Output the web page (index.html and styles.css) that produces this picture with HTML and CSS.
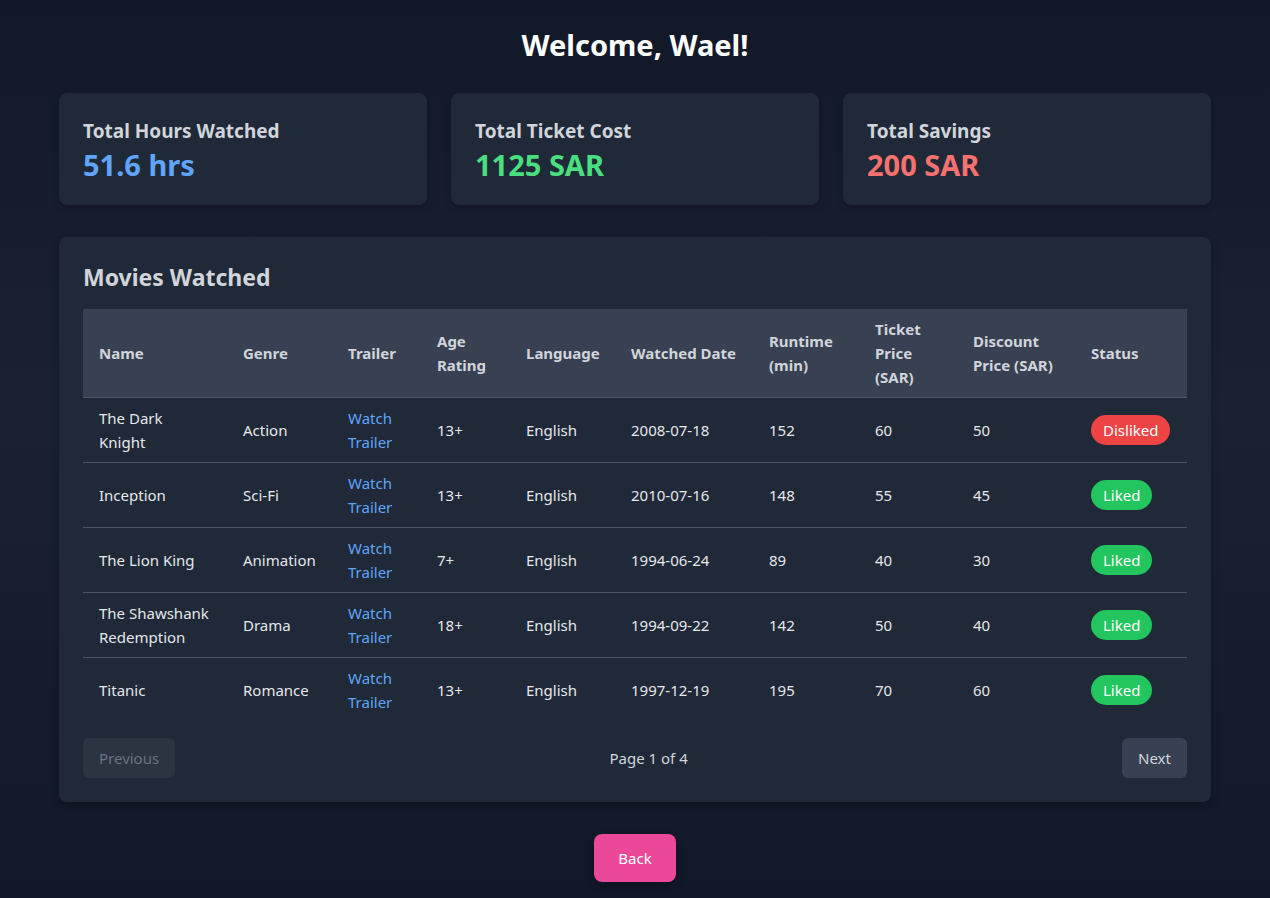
FILE: index.html
```html
<!DOCTYPE html>
<html lang="en">
<head>
<meta charset="utf-8">
<title>Dashboard</title>
<link rel="stylesheet" href="styles.css">
</head>
<body>
<main class="page">
  <h1 class="welcome">Welcome, Wael!</h1>
  <section class="stats">
    <div class="stat-card">
      <div class="stat-label">Total Hours Watched</div>
      <div class="stat-value blue">51.6 hrs</div>
    </div>
    <div class="stat-card">
      <div class="stat-label">Total Ticket Cost</div>
      <div class="stat-value green">1125 SAR</div>
    </div>
    <div class="stat-card">
      <div class="stat-label">Total Savings</div>
      <div class="stat-value red">200 SAR</div>
    </div>
  </section>

  <section class="movies-card">
    <h2 class="movies-title">Movies Watched</h2>
    <table class="movies">
      <thead>
        <tr>
          <th class="c-name">Name</th>
          <th class="c-genre">Genre</th>
          <th class="c-trailer">Trailer</th>
          <th class="c-age">Age Rating</th>
          <th class="c-lang">Language</th>
          <th class="c-date">Watched Date</th>
          <th class="c-run">Runtime (min)</th>
          <th class="c-ticket">Ticket Price (SAR)</th>
          <th class="c-disc">Discount Price (SAR)</th>
          <th class="c-status">Status</th>
        </tr>
      </thead>
      <tbody>
        <tr>
          <td>The Dark Knight</td><td>Action</td><td><a class="trailer" href="#">Watch Trailer</a></td><td>13+</td><td>English</td><td>2008-07-18</td><td>152</td><td>60</td><td>50</td><td><span class="badge disliked">Disliked</span></td>
        </tr>
        <tr>
          <td>Inception</td><td>Sci-Fi</td><td><a class="trailer" href="#">Watch Trailer</a></td><td>13+</td><td>English</td><td>2010-07-16</td><td>148</td><td>55</td><td>45</td><td><span class="badge liked">Liked</span></td>
        </tr>
        <tr>
          <td>The Lion King</td><td>Animation</td><td><a class="trailer" href="#">Watch Trailer</a></td><td>7+</td><td>English</td><td>1994-06-24</td><td>89</td><td>40</td><td>30</td><td><span class="badge liked">Liked</span></td>
        </tr>
        <tr>
          <td>The Shawshank Redemption</td><td>Drama</td><td><a class="trailer" href="#">Watch Trailer</a></td><td>18+</td><td>English</td><td>1994-09-22</td><td>142</td><td>50</td><td>40</td><td><span class="badge liked">Liked</span></td>
        </tr>
        <tr>
          <td>Titanic</td><td>Romance</td><td><a class="trailer" href="#">Watch Trailer</a></td><td>13+</td><td>English</td><td>1997-12-19</td><td>195</td><td>70</td><td>60</td><td><span class="badge liked">Liked</span></td>
        </tr>
      </tbody>
    </table>
    <div class="pager">
      <button class="pager-btn disabled" disabled>Previous</button>
      <span class="pager-info">Page 1 of 4</span>
      <button class="pager-btn">Next</button>
    </div>
  </section>

  <div class="back-wrap">
    <button class="back-btn">Back</button>
  </div>
</main>
</body>
</html>
```

FILE: styles.css
```css
* { box-sizing: border-box; }
html, body { margin: 0; padding: 0; }
body {
  min-height: 898px;
  background: linear-gradient(180deg, #111827 0%, #1a2130 45%, #111827 100%);
  color: #d1d5db;
  font-family: "Noto Sans", "Open Sans", sans-serif;
}
.page {
  max-width: 1152px;
  margin: 0 auto;
  padding: 27px 0 16px;
}
.welcome {
  margin: 0 0 30px;
  text-align: center;
  color: #ffffff;
  font-size: 29px;
  line-height: 36px;
  font-weight: 700;
}
.stats {
  display: grid;
  grid-template-columns: repeat(3, 1fr);
  gap: 24px;
  margin-bottom: 32px;
}
.stat-card {
  background: #1f2937;
  border-radius: 8px;
  padding: 24px;
  height: 112px;
  box-shadow: 0 4px 6px rgba(0,0,0,0.15);
}
.stat-label {
  font-size: 19px;
  line-height: 28px;
  font-weight: 700;
  color: #d1d5db;
}
.stat-value {
  margin-top: 2px;
  font-size: 29px;
  line-height: 36px;
  font-weight: 700;
}
.blue { color: #60a5fa; }
.green { color: #4ade80; }
.red { color: #f87171; }

.movies-card {
  background: #1f2937;
  border-radius: 8px;
  padding: 24px;
  box-shadow: 0 4px 10px rgba(0,0,0,0.2);
}
.movies-title {
  margin: 0 0 16px;
  font-size: 23px;
  line-height: 32px;
  font-weight: 700;
  color: #d1d5db;
}
.movies {
  width: 100%;
  border-collapse: collapse;
  table-layout: fixed;
  font-size: 15px;
  line-height: 24px;
}
.movies th, .movies td {
  padding: 8px 16px;
  text-align: left;
  vertical-align: middle;
}
.movies thead tr { background: #374151; }
.movies th {
  font-weight: 700;
  color: #d1d5db;
  border-bottom: 1px solid #4b5563;
}
.movies td { color: #e5e7eb; }
.movies tbody tr { border-bottom: 1px solid #4b5563; height: 65px; }
.movies tbody tr:last-child { border-bottom: none; }
.c-name { width: 144px; }
.c-genre { width: 105px; }
.c-trailer { width: 89px; }
.c-age { width: 89px; }
.c-lang { width: 105px; }
.c-date { width: 138px; }
.c-run { width: 106px; }
.c-ticket { width: 98px; }
.c-disc { width: 118px; }
.c-status { width: 112px; }
.trailer { color: #60a5fa; text-decoration: none; }
.badge {
  display: inline-block;
  padding: 3px 12px;
  border-radius: 9999px;
  color: #ffffff;
  font-size: 15px;
  line-height: 24px;
}
.disliked { background: #ef4444; }
.liked { background: #22c55e; }

.pager {
  margin-top: 15px;
  display: flex;
  align-items: center;
  justify-content: space-between;
}
.pager-btn {
  font-family: inherit;
  font-size: 15px;
  line-height: 24px;
  padding: 8px 16px;
  border: none;
  border-radius: 6px;
  background: #374151;
  color: #d1d5db;
}
.pager-btn.disabled { background: #2b3441; color: #6b7280; }
.pager-info { font-size: 15px; color: #d1d5db; }

.back-wrap {
  display: flex;
  justify-content: center;
  margin-top: 32px;
}
.back-btn {
  font-family: inherit;
  font-size: 15px;
  line-height: 24px;
  padding: 12px 24px;
  border: none;
  border-radius: 8px;
  background: #ec4899;
  color: #ffffff;
  box-shadow: 0 4px 8px rgba(0,0,0,0.3);
}
```
